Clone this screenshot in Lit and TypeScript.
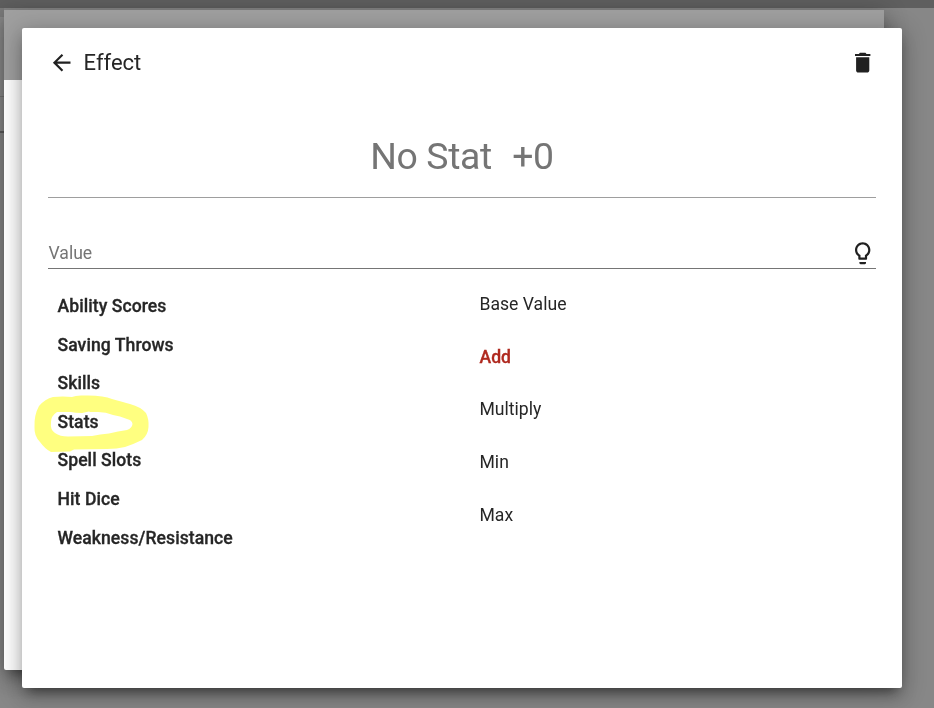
import { LitElement, html, css, svg } from "lit";
import { customElement, property } from "lit/decorators.js";

const icons: Record<string, string> = {
  back: "M20 11H7.83l5.59-5.59L12 4l-8 8 8 8 1.41-1.41L7.83 13H20v-2z",
  trash: "M6 19c0 1.1.9 2 2 2h8c1.1 0 2-.9 2-2V7H6v12zM19 4h-3.5l-1-1h-5l-1 1H5v2h14V4z",
  bulb: "M9 21c0 .55.45 1 1 1h4c.55 0 1-.45 1-1v-1H9v1zm3-19C8.14 2 5 5.14 5 9c0 2.38 1.19 4.47 3 5.74V17c0 .55.45 1 1 1h6c.55 0 1-.45 1-1v-2.26c1.81-1.27 3-3.36 3-5.74 0-3.86-3.14-7-7-7zm2.85 11.1l-.85.6V16h-4v-2.3l-.85-.6C7.8 12.16 7 10.63 7 9c0-2.76 2.24-5 5-5s5 2.24 5 5c0 1.63-.8 3.16-2.15 4.1z",
};

@customElement("md-icon")
class MdIcon extends LitElement {
  @property() name = "";
  static styles = css`
    :host { display: block; width: 26.4px; height: 26.4px; flex: none; }
    svg { display: block; width: 100%; height: 100%; fill: #212121; overflow: visible; }
  `;
  render() {
    return html`<svg viewBox="0 0 24 24">${svg`<path d=${icons[this.name]}></path>`}</svg>`;
  }
}

@customElement("app-root")
class AppRoot extends LitElement {
  static styles = css`
    :host {
      display: block; position: relative; width: 934px; height: 708px; overflow: hidden;
      background: #878787; color: #262626;
      font: 17.6px/26.4px Roboto, sans-serif;
    }
    * { box-sizing: border-box; }
    .topbar { height: 8px; background: #5f5f5f; }
    .side { width: 4px; height: 125px; background: #8b8b8b; border-bottom: 2px solid #5c5c5c; }
    .side-top { height: 9px; background: #7d7d7d; }
    .side-row { height: 80px; border-bottom: 1px solid #757575; }
    .card {
      position: absolute; width: 880px; height: 660px; border-radius: 2px; background: #fff;
      box-shadow: 0 12px 18px 0 rgba(0,0,0,.1), 0 4px 22px 3px rgba(0,0,0,.22),
        0 8.8px 11px -5.5px rgba(0,0,0,.4);
    }
    .back { left: 4px; top: 10px; }
    .back-header { height: 70px; background: #9f9f9f; }
    .front { left: 22px; top: 28px; padding: 0 26px; }
    header { display: flex; align-items: center; height: 70px; }
    .back-icon { margin: -1px 0 0; transform: translate(0.5px, 0.5px); }
    .title { flex: 1; margin-left: 9.2px; font-size: 22px; }
    .trash { margin: -1px 0 0; transform: translate(-0.5px, 0.5px); }
    .summary {
      display: flex; justify-content: center; gap: 20.4px; height: 100px; padding-top: 36px;
      font-size: 37.4px; line-height: 44px; letter-spacing: -0.374px; color: #757575; border-bottom: 1px solid #9e9e9e;
    }
    .field {
      display: flex; justify-content: space-between; align-items: center;
      height: 32px; margin-top: 39px; padding-top: 1px; border-bottom: 1px solid #757575; color: #757575;
    }
    .label { padding-left: 0.5px; }
    .bulb { margin-right: 0.5px; transform: translate(0.5px, 0); }
    .columns { display: grid; grid-template-columns: 422px 1fr; padding: 8.8px 0 0 9.5px; }
    .groups { padding-top: 9.2px; font-weight: 500; letter-spacing: 0.05px; -webkit-text-stroke: 0.3px currentColor; }
    .group { height: 38.6px; line-height: 38.6px; }
    .op { height: 52.8px; line-height: 52.8px; }
    .selected { color: #b02a20; font-weight: 500; -webkit-text-stroke: 0.3px currentColor; }
    .marker { position: absolute; left: 12px; top: 367px; width: 116px; height: 58px; mix-blend-mode: multiply; }
  `;
  render() {
    return html`
      <div class="topbar"></div>
      <div class="side"><div class="side-top"></div><div class="side-row"></div></div>
      <section class="card back"><div class="back-header"></div></section>
      <section class="card front">
        <header>
          <md-icon class="back-icon" name="back"></md-icon>
          <span class="title">Effect</span>
          <md-icon class="trash" name="trash"></md-icon>
        </header>
        <div class="summary"><span>No Stat</span><span>+0</span></div>
        <div class="field"><span class="label">Value</span><md-icon class="bulb" name="bulb"></md-icon></div>
        <div class="columns">
          <div class="groups">
            ${["Ability Scores", "Saving Throws", "Skills", "Stats", "Spell Slots", "Hit Dice", "Weakness/Resistance"].map(
              (g) => html`<div class="group">${g}</div>`)}
          </div>
          <div>
            ${["Base Value", "Add", "Multiply", "Min", "Max"].map(
              (o) => html`<div class="op ${o === "Add" ? "selected" : ""}">${o}</div>`)}
          </div>
        </div>
        <svg class="marker" viewBox="34 395 116 58">
          <path fill="#ffff80" fill-rule="evenodd" d="M53 397 Q63 396 72 397 Q76 395 84 395.5 Q103 395 112 399 Q123 402 130 404 Q141 407 146 413 Q149 419 148.500 427 Q148 435 142 440 Q134 444 125 447 Q117 449 107 449 L74 449.500 L70 451.500 L51 452 Q45 449 40 442 Q34 436 34.500 427 Q34 415 39 406 Q45 399 53 397Z
          M57 412 Q51 416 51 422 Q50 430 55 433 Q60 436.500 68 436.500 L92 436 Q100 434 109 433.500 Q118 431 127 430 Q132 428 132.500 424 Q132 420 127 419 Q120 416 113 415 Q106 412 98 412 L90 412 L89 411.500 L82 413 Q75 413 71 412Z"></path>
        </svg>
      </section>
    `;
  }
}
